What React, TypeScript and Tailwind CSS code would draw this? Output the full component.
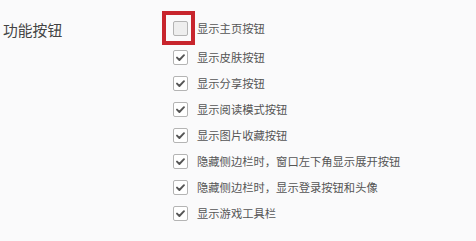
import React from "react";

const items = [
  "显示皮肤按钮",
  "显示分享按钮",
  "显示阅读模式按钮",
  "显示图片收藏按钮",
  "隐藏侧边栏时，窗口左下角显示展开按钮",
  "隐藏侧边栏时，显示登录按钮和头像",
  "显示游戏工具栏",
];

function Check({ checked }: { checked: boolean }) {
  return (
    <div
      className={
        "w-[15px] h-[15px] shrink-0 rounded-[2px] border border-[#b4b4b4] flex items-center justify-center " +
        (checked ? "bg-white" : "bg-[#eeeeee]")
      }
    >
      {checked && (
        <svg width="11" height="11" viewBox="0 0 11 11">
          <polyline
            points="2,5.6 4.4,8 9,3.2"
            fill="none"
            stroke="#555"
            strokeWidth="1.9"
            strokeLinecap="round"
            strokeLinejoin="round"
          />
        </svg>
      )}
    </div>
  );
}

export default function App() {
  return (
    <div
      className="w-[476px] h-[241px] bg-[#fafafb] flex"
      style={{ fontFamily: '"Noto Sans CJK SC", "Noto Sans", sans-serif' }}
    >
      <div className="w-[173px] shrink-0 pl-[3px] pt-[19px] text-[14.8px] text-[#444] leading-[22px]">
        功能按钮
      </div>
      <div className="relative flex flex-col pt-[15px] text-[11.3px] text-[#555]">
        <div className="absolute left-[-11px] top-[11px] w-[33px] h-[34px] border-[4px] border-[#c8252d]" />
        <div className="h-[26px] flex items-center gap-[9px] mb-[3px]">
          <Check checked={false} />
          <span>显示主页按钮</span>
        </div>
        {items.map((t) => (
          <div key={t} className="h-[26px] flex items-center gap-[9px]">
            <Check checked={true} />
            <span>{t}</span>
          </div>
        ))}
      </div>
    </div>
  );
}
